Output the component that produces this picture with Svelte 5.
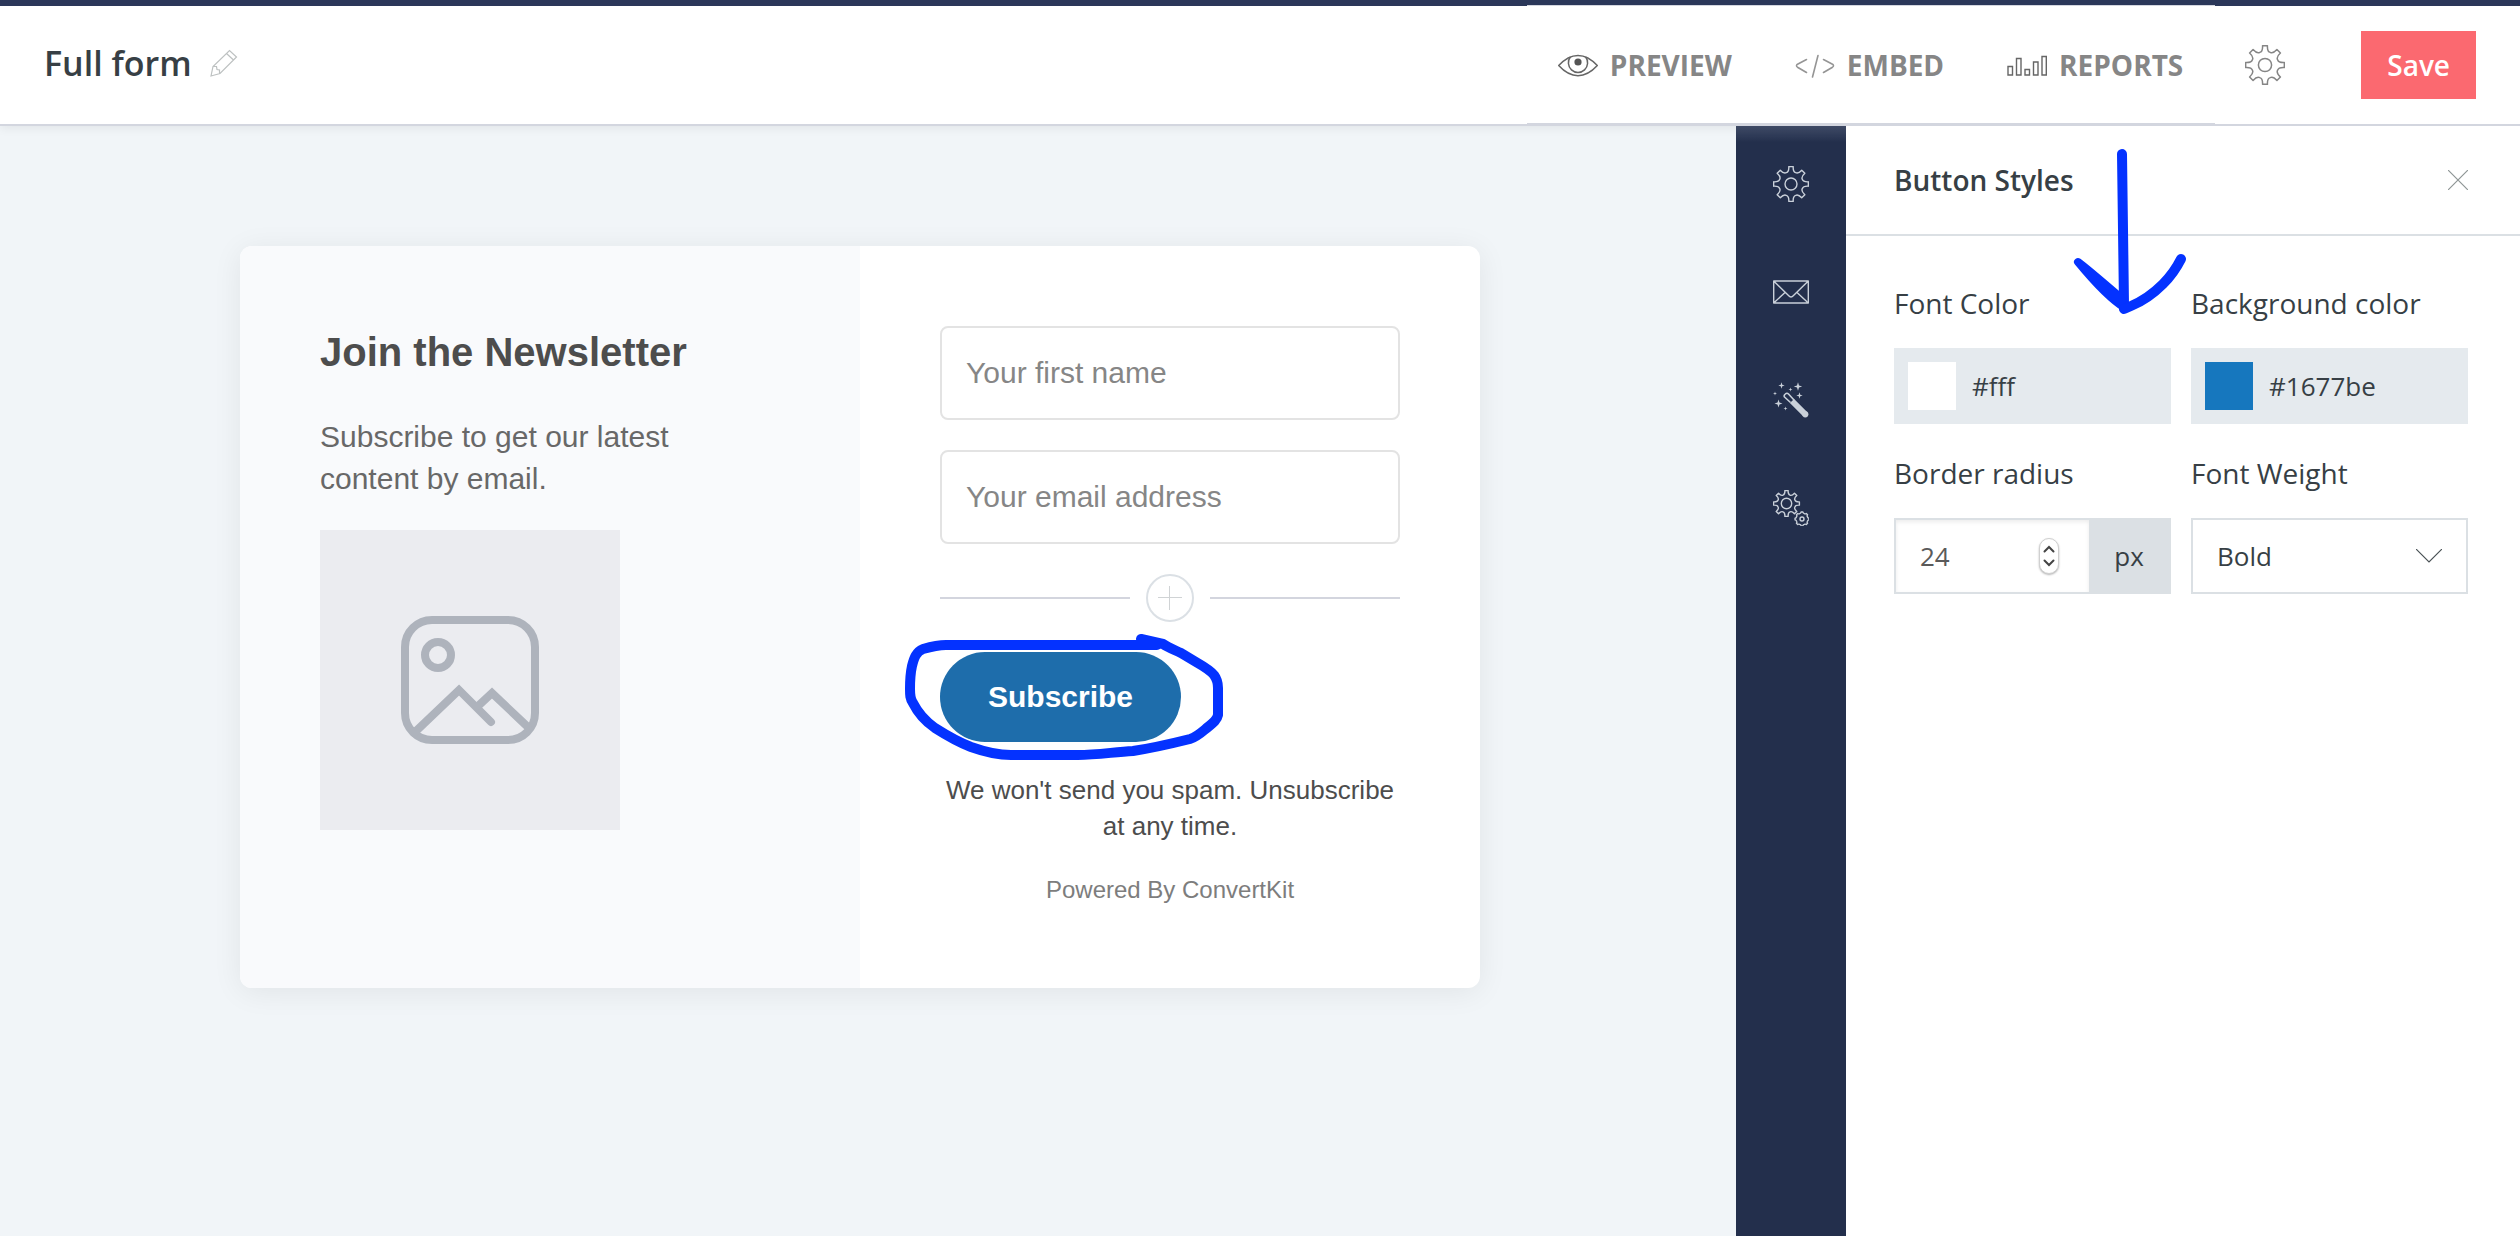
<script>
    let formName = 'Full form';
    let radius = 24;
    let weight = 'Bold';
    let firstName = '';
    let email = '';

    const colors = [
        { id: 'font-color', label: 'Font Color', value: '#fff' },
        { id: 'bg-color', label: 'Background color', value: '#1677be' }
    ];

    const tools = ['settings', 'email', 'style', 'advanced'];

    // outline of a gear with 8 teeth, r is the outer radius
    const gear = (cx, cy, r, teeth = 8, depth = 0.7) => {
        const step = 360 / teeth;
        const pt = (radius, deg) => {
            const a = (deg * Math.PI) / 180;
            return (cx + radius * Math.sin(a)).toFixed(2) + ' ' + (cy - radius * Math.cos(a)).toFixed(2);
        };
        let d = 'M' + pt(r, -step * 0.16);
        for (let i = 0; i < teeth; i++) {
            const a = i * step;
            d += 'L' + pt(r, a + step * 0.16);
            d += 'Q' + pt(r * depth, a + step * 0.2) + ' ' + pt(r * depth, a + step * 0.5);
            d += 'Q' + pt(r * depth, a + step * 0.8) + ' ' + pt(r, a + step * 0.84);
        }
        return d + 'Z';
    };

    // four pointed sparkle
    const star = (x, y, r) => {
        const k = r * 0.24;
        return `M${x} ${y - r}L${x + k} ${y - k}L${x + r} ${y}L${x + k} ${y + k}L${x} ${y + r}L${x - k} ${y + k}L${x - r} ${y}L${x - k} ${y - k}Z`;
    };

    const sparkles = star(8.5, 3.5, 3.2) + star(25, 4.5, 4.2) + star(26.5, 13.5, 3.2) + star(5.5, 21.5, 4)
        + star(17.5, 7.5, 2) + star(2, 11.5, 2) + star(12.5, 26.5, 2);
</script>

<div class="app">
    <header>
        <div class="title">
            <h1>{formName}</h1>
            <button class="icon-btn" aria-label="Rename form">
                <svg width="28" height="28" viewBox="0 0 28 28" fill="none" stroke="#bdc1c1" stroke-width="1.2">
                    <path d="M1 27L3 17.5L19.5 1.5L26.5 8L10 24.5ZM16.5 4.5L23.5 11M3 17.5H6.5L7 20.5L9.5 21V24.5" />
                </svg>
            </button>
        </div>

        <nav>
            <a href="#preview">
                <svg width="40" height="40" viewBox="0 0 40 40" fill="none" stroke="#666" stroke-width="1.5">
                    <path d="M.7 20.5C13 7 27 7 39.3 20.5C27 34 13 34 .7 20.5Z" />
                    <path d="M12.5 11.8A9.6 9.6 0 1 0 27.5 11.8" />
                    <circle cx="20" cy="17" r="3.6" fill="#555" stroke="none" />
                </svg>
                PREVIEW
            </a>
            <a href="#embed">
                <svg width="40" height="40" viewBox="0 0 40 40" fill="none" stroke="#959595" stroke-width="1.6" stroke-linecap="round" stroke-linejoin="round">
                    <path d="M11.5 14.5L2.5 19.2Q.5 20.7 2.5 22.2L11.5 27.5M28.500 14.5L37.5 19.2Q39.5 20.7 37.5 22.2L28.5 27.5M23 10.5L17.5 32" />
                </svg>
                EMBED
            </a>
            <a href="#reports">
                <svg width="40" height="40" viewBox="0 0 40 40" fill="none" stroke="#666" stroke-width="1.4">
                    <path d="M1 21.500H5.5V30H1ZM9.500 13.5H14V30H9.5ZM18 24.5H22.5V30H18ZM26.500 17H31V30H26.5ZM35 11.500H39.3V30H35Z" />
                </svg>
                REPORTS
            </a>
        </nav>

        <button class="icon-btn" aria-label="Form settings">
            <svg width="40" height="42" viewBox="0 0 40 42" fill="none" stroke="#858585" stroke-width="1.5" stroke-linejoin="round">
                <path d={gear(20, 21, 19.5)} />
                <circle cx="20" cy="21" r="6.6" />
            </svg>
        </button>
        <button class="save">Save</button>
    </header>

    <div class="workspace">
        <main>
            <section class="card">
                <div class="intro">
                    <h2>Join the Newsletter</h2>
                    <p>Subscribe to get our latest content by email.</p>
                    <div class="placeholder">
                        <svg width="138" height="128" viewBox="0 0 138 128" fill="none" stroke="#aeb3bc" stroke-width="8">
                            <rect x="4" y="4" width="130" height="120" rx="27" />
                            <circle cx="37" cy="39" r="13" />
                            <path d="M13 117L58 74L90 106" stroke-linecap="round" />
                            <path d="M76 91L91 77L129 113" />
                        </svg>
                    </div>
                </div>

                <form on:submit|preventDefault>
                    <input type="text" placeholder="Your first name" aria-label="First name" bind:value={firstName} />
                    <input type="email" placeholder="Your email address" aria-label="Email address" bind:value={email} />
                    <div class="divider">
                        <button type="button" class="add" aria-label="Add field">
                            <svg width="26" height="26" viewBox="0 0 26 26" fill="none" stroke="#d0d3d5">
                                <path d="M12.5 1V25M1 12.5H25" />
                            </svg>
                        </button>
                    </div>
                    <div class="submit">
                        <button type="submit" class="subscribe">Subscribe</button>
                        <svg class="marker" width="370" height="155" viewBox="0 0 370 155" fill="none" stroke="#0432ff" stroke-width="10" stroke-linecap="round" stroke-linejoin="round">
                            <path d="M291 34H80C71 34 64 36 57 38C50 41 48 47 46 55C44 64 44 70 44 78C44 84 44 88 47 92C52 102 59 110 69 117C80 124 92 131 105 136C119 141 131 144 145 144H212C231 144 248 141 267 140C287 137 304 133 324 128C331 126 337 120 342 116C347 112 351 109 352 104V77C352 72 351 68 348 64C344 59 337 55 330 51L315 42C309 39 303 37 297 33L275 28" />
                        </svg>
                    </div>
                    <div class="footnote">
                        <p>We won't send you spam. Unsubscribe at any time.</p>
                        <a href="#convertkit">Powered By ConvertKit</a>
                    </div>
                </form>
            </section>
        </main>

        <div class="toolbar">
            {#each tools as tool}
                <button class="icon-btn" aria-label={tool}>
                    <svg width="36" height="36" viewBox="0 0 36 36" fill="none" stroke="#c9d0d9" stroke-width="1.4" stroke-linejoin="round">
                        {#if tool == 'settings'}
                            <path d={gear(18, 18, 17.5)} />
                            <circle cx="18" cy="18" r="6" />
                        {:else if tool == 'email'}
                            <path d="M.7 7H35.3V29H.7ZM.7 7L15.5 21.5Q18 24.5 20.5 21.5L35.3 7M.7 29L12 18.5M35.3 29L24 18.5" />
                        {:else if tool == 'style'}
                            <path d={sparkles} fill="#c9d0d9" stroke="none" />
                            <path d="M17.500 20.500L11.500 15Q10.500 13.500 12.300 12Q14 10.500 15.500 12L21 18" stroke-width="1.6" />
                            <path d="M19 19L32 32" stroke-width="6" />
                            <circle cx="32.3" cy="32.3" r="3.1" fill="#c9d0d9" stroke="none" />
                        {:else}
                            <path d={gear(13.5, 13.5, 13)} />
                            <circle cx="13.5" cy="13.5" r="5.2" />
                            <path d={gear(29, 29, 7, 8, 0.84)} />
                            <circle cx="29" cy="29" r="2" />
                        {/if}
                    </svg>
                </button>
            {/each}
        </div>

        <aside>
            <div class="panel-head">
                <h3>Button Styles</h3>
                <button class="icon-btn" aria-label="Close">
                    <svg width="20" height="20" viewBox="0 0 20 20" fill="none" stroke="#8f9696" stroke-width="1.2">
                        <path d="M0 0L20 20M20 0L0 20" />
                    </svg>
                </button>
            </div>

            <div class="fields">
                {#each colors as color}
                    <div class="field">
                        <label for={color.id}>{color.label}</label>
                        <div class="color">
                            <span class="swatch" style="background: {color.value}"></span>
                            <input id={color.id} type="text" bind:value={color.value} />
                        </div>
                    </div>
                {/each}

                <div class="field">
                    <label for="radius">Border radius</label>
                    <div class="number">
                        <input id="radius" type="number" bind:value={radius} />
                        <div class="stepper">
                            <button aria-label="Increase" on:click={() => radius++}>
                                <svg width="12" height="8" viewBox="0 0 12 8"><path d="M1.5 6.5L6 2L10.5 6.5" /></svg>
                            </button>
                            <button aria-label="Decrease" on:click={() => radius--}>
                                <svg width="12" height="8" viewBox="0 0 12 8"><path d="M1.5 1.5L6 6L10.5 1.5" /></svg>
                            </button>
                        </div>
                        <span class="unit">px</span>
                    </div>
                </div>

                <div class="field">
                    <label for="weight">Font Weight</label>
                    <div class="select">
                        <select id="weight" bind:value={weight}>
                            <option>Normal</option>
                            <option>Bold</option>
                        </select>
                        <svg width="26" height="14" viewBox="0 0 26 14" fill="none" stroke="#4a5256" stroke-width="1.2">
                            <path d="M0 0L13 13L26 0" />
                        </svg>
                    </div>
                </div>
            </div>

            <svg class="arrow" width="120" height="170" viewBox="0 0 120 170" fill="none" stroke="#0432ff" stroke-width="10" stroke-linecap="round" stroke-linejoin="round">
                <path d="M52 9L54 160" />
                <path d="M8 117C20 126 38 142 50 152L55 163C40 154 22 134 8 117Z" fill="#0432ff" stroke-width="8" />
                <path d="M111 114C106 124 100 132 93 139C84 148 73 156 61 161L54 164" />
            </svg>
        </aside>
    </div>
</div>

<style>
    :global(body) {
        margin: 0;
    }
    .app {
        display: flex;
        flex-direction: column;
        min-height: 100vh;
        color: #373f45;
        font: 28px/38px 'Open Sans', 'Noto Sans', sans-serif;
    }
    .app :global(*) {
        box-sizing: border-box;
    }
    button, input, select {
        font: inherit;
        color: inherit;
        border: 0;
        padding: 0;
        margin: 0;
        background: none;
        border-radius: 0;
        outline: none;
    }
    button {
        cursor: pointer;
    }
    svg {
        display: block;
        flex: none;
    }
    h1, h2, h3, p {
        margin: 0;
    }

    header {
        position: relative;
        display: flex;
        align-items: center;
        height: 126px;
        padding: 0 44px;
        background: #fff;
        border-top: 6px solid #2b3759;
        border-bottom: 2px solid #d3d6df;
        box-shadow: 0 2px 10px rgba(0, 0, 0, .07);
    }
    .title {
        display: flex;
        align-items: center;
        gap: 18px;
        padding-bottom: 4px;
    }
    h1 {
        font-size: 34px;
        font-weight: 600;
    }
    nav {
        display: flex;
        align-self: stretch;
        margin: -1px 30px -1px auto;
    }
    nav a {
        display: flex;
        align-items: center;
        gap: 12px;
        padding: 0 32px 0 31px;
        color: #868686;
        font-weight: 700;
        text-decoration: none;
        background: #fff;
        border-top: 1px solid #d3d6df;
        border-bottom: 2px solid #d3d6df;
    }
    .save {
        height: 68px;
        margin-left: 76px;
        padding: 0 26px;
        color: #fff;
        font-weight: 600;
        background: #fb6970;
    }

    .workspace {
        display: flex;
        flex: 1;
    }
    main {
        flex: 1;
        padding: 120px 256px 120px 240px;
        background: #f1f5f8;
    }
    .card {
        display: grid;
        grid-template-columns: 1fr 1fr;
        max-width: 1240px;
        margin: 0 auto;
        background: #fff;
        border-radius: 12px;
        box-shadow: 0 4px 30px rgba(0, 0, 0, .07);
        font-family: 'Liberation Sans', Arial, sans-serif;
    }
    .intro {
        padding: 80px;
        background: #f9fafc;
        border-radius: 12px 0 0 12px;
    }
    h2 {
        margin-bottom: 38px;
        color: #4d4d4d;
        font-size: 40px;
        line-height: 52px;
    }
    .intro p {
        max-width: 400px;
        color: #686868;
        font-size: 30px;
        line-height: 42px;
    }
    .placeholder {
        display: flex;
        align-items: center;
        justify-content: center;
        width: 300px;
        height: 300px;
        margin-top: 30px;
        background: #ebecf0;
    }
    form {
        display: flex;
        flex-direction: column;
        gap: 30px;
        padding: 80px;
    }
    form input {
        height: 94px;
        padding: 0 24px;
        font-size: 30px;
        border: 2px solid #e3e3e3;
        border-radius: 8px;
    }
    form input::placeholder {
        color: #868686;
        opacity: 1;
    }
    .divider {
        display: flex;
        align-items: center;
        gap: 16px;
    }
    .divider::before,
    .divider::after {
        content: '';
        flex: 1;
        height: 2px;
        background: #d3d5de;
    }
    .add {
        display: flex;
        align-items: center;
        justify-content: center;
        width: 48px;
        height: 48px;
        border: 2px solid #dbe0e5;
        border-radius: 50%;
    }
    .submit {
        position: relative;
        display: flex;
    }
    .subscribe {
        height: 90px;
        padding: 0 48px;
        color: #fff;
        font-size: 30px;
        font-weight: 700;
        background: #1e6dab;
        border-radius: 48px;
    }
    .marker {
        position: absolute;
        top: -41px;
        left: -74px;
        pointer-events: none;
    }
    .footnote {
        display: flex;
        flex-direction: column;
        gap: 28px;
        line-height: 36px;
        text-align: center;
    }
    .footnote p {
        color: #4d4d4d;
        font-size: 26px;
    }
    .footnote a {
        color: #7d7d7d;
        font-size: 24px;
        text-decoration: none;
    }

    .toolbar {
        display: flex;
        flex-direction: column;
        align-items: center;
        gap: 72px;
        width: 110px;
        padding-top: 40px;
        background: linear-gradient(#414d69, #232f4c 16px);
    }

    aside {
        position: relative;
        width: 674px;
        background: #fff;
    }
    .panel-head {
        display: flex;
        align-items: center;
        justify-content: space-between;
        height: 110px;
        padding: 0 52px 0 48px;
        border-bottom: 2px solid #dbe0e4;
    }
    h3 {
        font-size: 28px;
        font-weight: 600;
    }
    .fields {
        display: grid;
        grid-template-columns: repeat(2, minmax(0, 1fr));
        gap: 30px 20px;
        padding: 48px 52px 48px 48px;
    }
    label {
        display: block;
        margin-bottom: 26px;
    }
    .color, .number, .select {
        position: relative;
        display: flex;
        align-items: center;
        height: 76px;
        font-size: 26px;
    }
    .color {
        gap: 16px;
        padding: 0 14px;
        background: #e5eaee;
    }
    .swatch {
        flex: none;
        width: 48px;
        height: 48px;
    }
    .color input {
        flex: 1;
        min-width: 0;
    }
    .number {
        border: 2px solid #dbe0e4;
    }
    .number input {
        flex: 1;
        min-width: 0;
        height: 100%;
        padding-left: 24px;
        color: #5a5a5a;
        box-shadow: inset 0 2px 4px rgba(0, 0, 0, .08);
        appearance: textfield;
    }
    .number input::-webkit-inner-spin-button {
        appearance: none;
    }
    .stepper {
        position: absolute;
        right: 110px;
        display: flex;
        flex-direction: column;
        justify-content: space-evenly;
        align-items: center;
        width: 20px;
        height: 36px;
        background: #fff;
        border: 1px solid #d0d0d0;
        border-radius: 10px;
        box-shadow: 0 1px 2px rgba(0, 0, 0, .3);
    }
    .stepper path {
        fill: none;
        stroke: #444;
        stroke-width: 2;
        stroke-linecap: round;
    }
    .unit {
        align-self: stretch;
        width: 80px;
        line-height: 72px;
        text-align: center;
        background: #dbe0e4;
    }
    .select select {
        width: 100%;
        height: 100%;
        padding: 0 24px;
        appearance: none;
        border: 2px solid #dbe0e4;
    }
    .select svg {
        position: absolute;
        right: 26px;
        pointer-events: none;
    }
    .arrow {
        position: absolute;
        top: 19px;
        left: 224px;
        pointer-events: none;
    }
</style>
